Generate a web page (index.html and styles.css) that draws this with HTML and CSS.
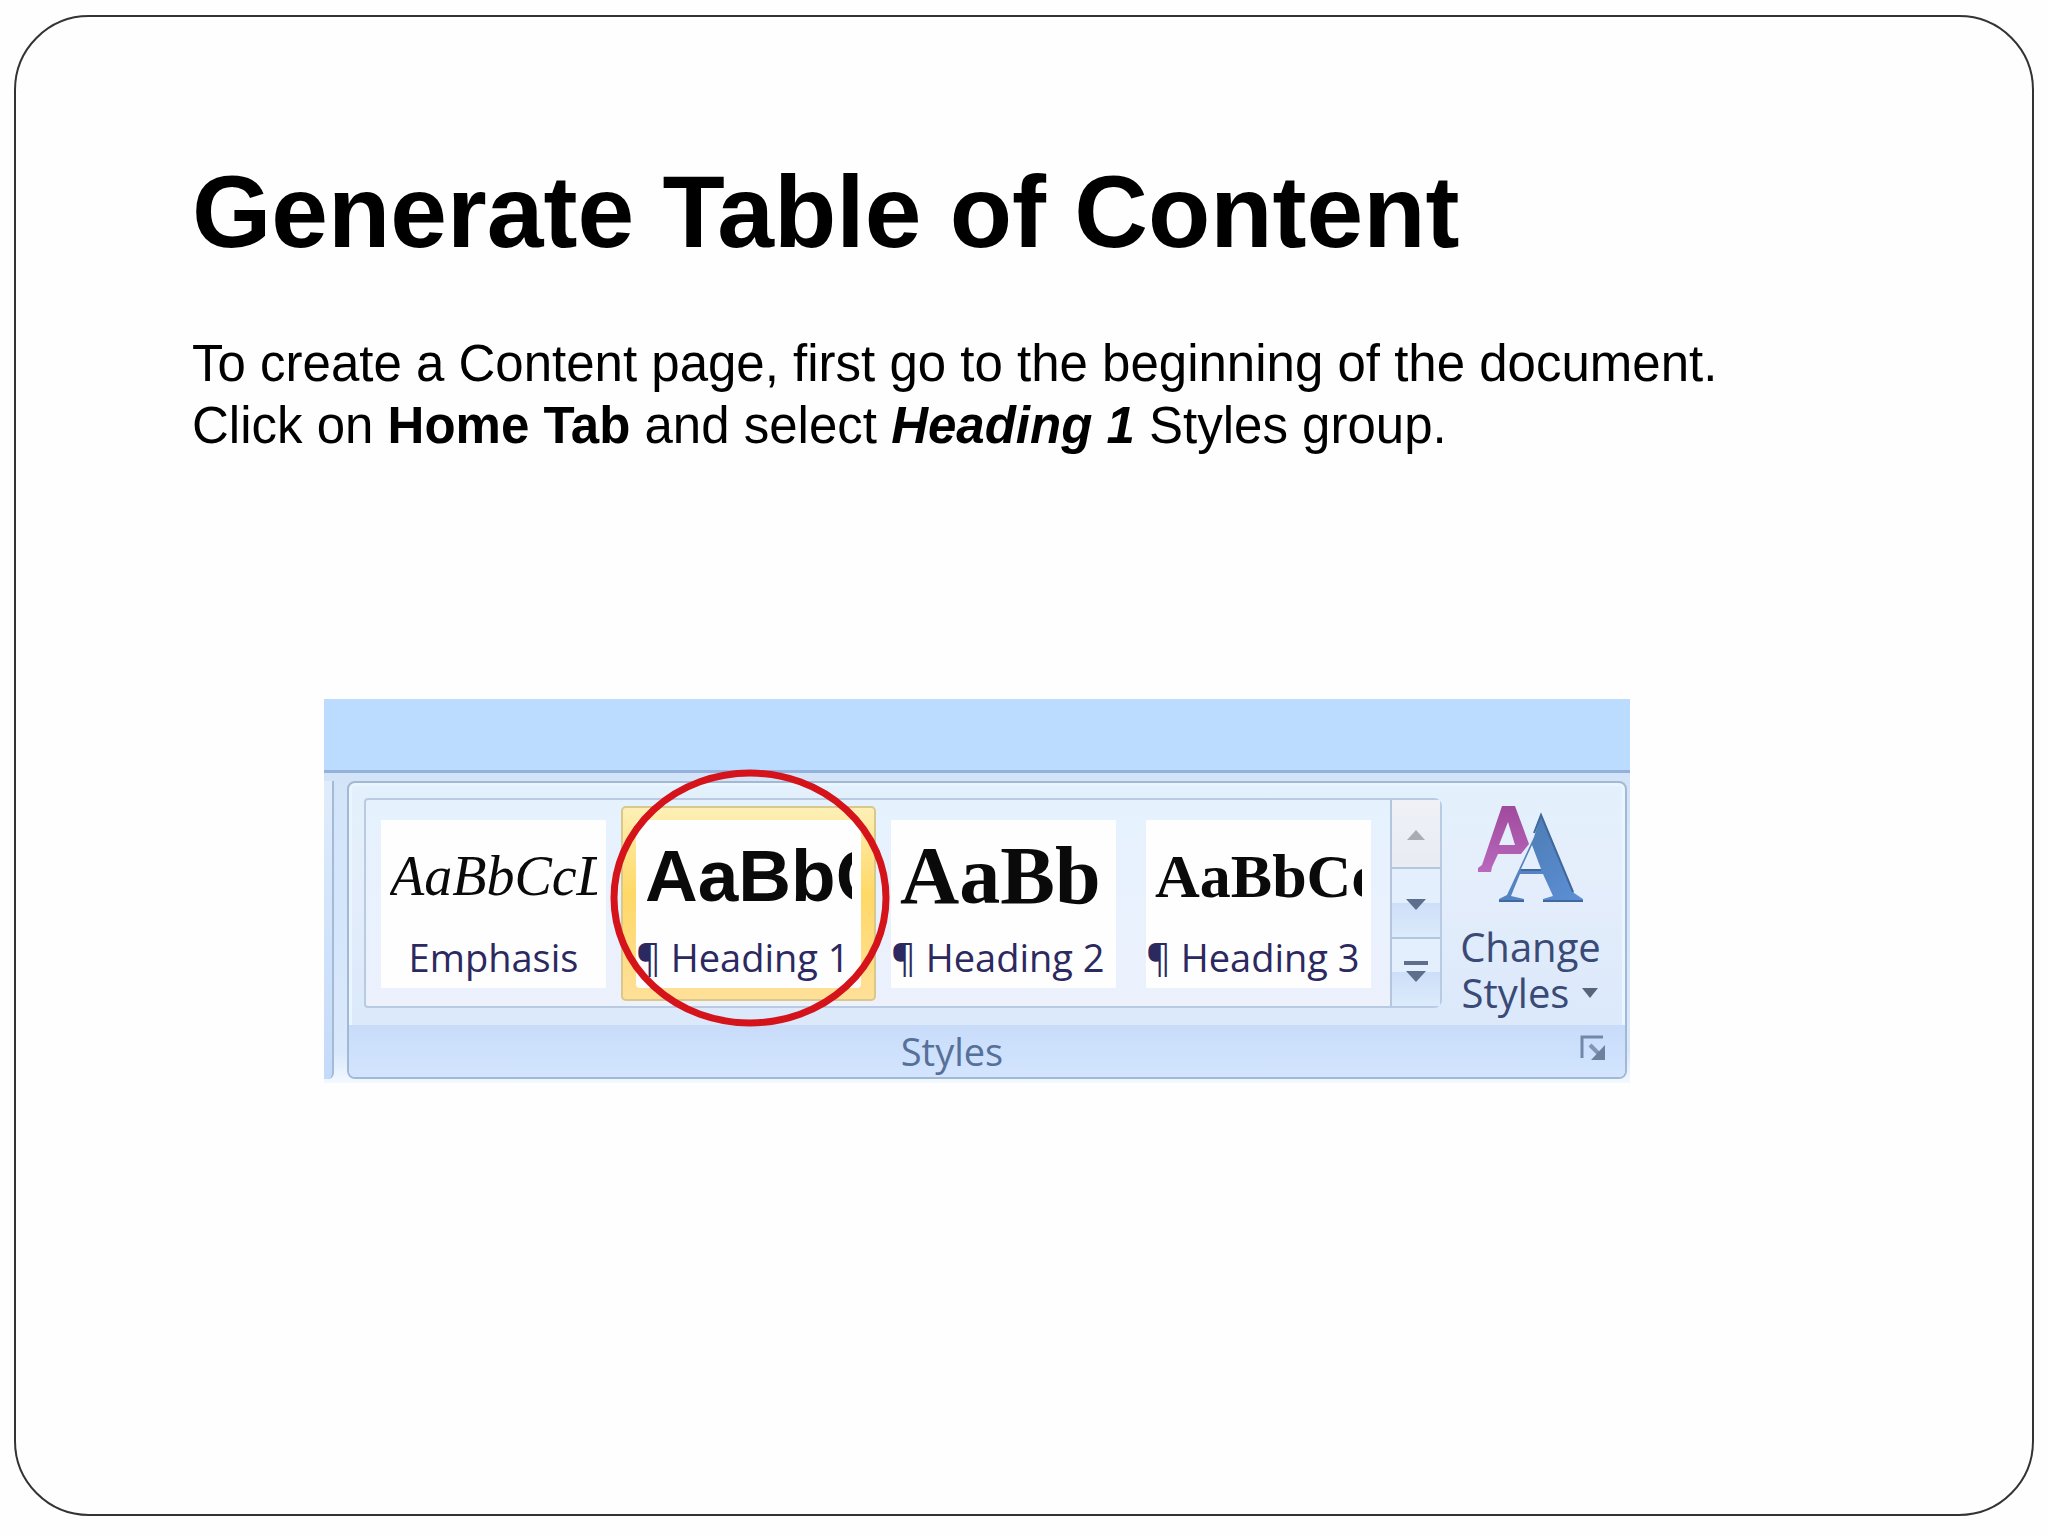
FILE: index.html
```html
<!DOCTYPE html>
<html lang="en">
<head>
    <meta charset="UTF-8">
    <meta name="viewport" content="width=device-width, initial-scale=1.0">
    <title>Generate Table of Content</title>
    <link rel="stylesheet" href="styles.css">
</head>
<body>
    <main class="slide">
        <h1>Generate Table of Content</h1>
        <p class="intro">To create a Content page, first go to the beginning of the document.<br>
            Click on <b>Home Tab</b> and select <b><i>Heading 1</i></b> Styles group.</p>

        <div class="ribbon">
            <div class="ribbon-top"></div>
            <div class="ribbon-body">
                <div class="prev-group"></div>
                <section class="group">
                    <div class="group-tools">
                        <div class="gallery">
                            <button type="button" class="style-item">
                                <span class="preview">
                                    <span class="sample emphasis">AaBbCcD</span>
                                    <span class="name centered">Emphasis</span>
                                </span>
                            </button>
                            <button type="button" class="style-item selected">
                                <span class="preview">
                                    <span class="sample heading-1">AaBbC</span>
                                    <span class="name">¶ Heading 1</span>
                                </span>
                                <svg class="circle" viewBox="0 0 280 258">
                                    <ellipse cx="140" cy="129" rx="136" ry="125" fill="none" stroke="#d4141a" stroke-width="7"/>
                                </svg>
                            </button>
                            <button type="button" class="style-item">
                                <span class="preview">
                                    <span class="sample heading-2">AaBb</span>
                                    <span class="name">¶ Heading 2</span>
                                </span>
                            </button>
                            <button type="button" class="style-item">
                                <span class="preview">
                                    <span class="sample heading-3">AaBbCc</span>
                                    <span class="name">¶ Heading 3</span>
                                </span>
                            </button>
                            <div class="scroller">
                                <button type="button" class="scroll-button disabled" aria-label="Row up">
                                    <svg width="28" height="24" viewBox="0 0 28 24"><path d="M5 18 14 8l9 10z" fill="#a9adb3"/></svg>
                                </button>
                                <button type="button" class="scroll-button" aria-label="Row down">
                                    <svg width="28" height="24" viewBox="0 0 28 24"><path d="M4 8h20L14 19z" fill="#5d6f8c"/></svg>
                                </button>
                                <button type="button" class="scroll-button" aria-label="More">
                                    <svg width="28" height="24" viewBox="0 0 28 24"><path d="M2 1h24v4H2zM4 11h20L14 22z" fill="#5d6f8c"/></svg>
                                </button>
                            </div>
                        </div>
                        <button type="button" class="change-styles">
                            <svg width="110" height="100" viewBox="0 0 110 100">
                                <defs>
                                    <linearGradient id="pink" x1="0" y1="0" x2="0" y2="1">
                                        <stop offset="0" stop-color="#a04a9c"/>
                                        <stop offset="1" stop-color="#b868bd"/>
                                    </linearGradient>
                                    <linearGradient id="blue" x1="0" y1="0" x2="1" y2="1">
                                        <stop offset="0" stop-color="#4a78ac"/>
                                        <stop offset="1" stop-color="#5c8fd6"/>
                                    </linearGradient>
                                </defs>
                                <path fill="url(#pink)" fill-rule="evenodd" d="M26 3h13l14 38-8 10H22l-6 13-1 5H2v-4l4-3zM32 19l-9 23h16z"/>
                                <path fill="url(#blue)" fill-rule="evenodd" d="M65 11 98 90l9 6v3H67v-3l10-3-10-22H44l-9 22 13 3v3H23v-3l8-4 27-58zM56 42 45 66h20z"/>
                                <path fill="none" stroke="#41689c" stroke-width="2" d="M58 30 65 12 97 89M45 67h20M23 98h25M67 98h40"/>
                            </svg>
                            <span>Change</span>
                            <span class="with-arrow">Styles
                                <svg width="18" height="12" viewBox="0 0 18 12"><path d="M1 1h16L9 11z" fill="#56647c"/></svg>
                            </span>
                        </button>
                    </div>
                    <footer class="group-footer">
                        <span>Styles</span>
                        <button type="button" class="launcher" aria-label="Styles window">
                            <svg width="28" height="28" viewBox="0 0 28 28">
                                <path d="M3 24V3h21" fill="none" stroke="#7288a8" stroke-width="3"/>
                                <path d="M11 11l9 9" fill="none" stroke="#8296b4" stroke-width="4"/>
                                <path d="M26 11v15H12z" fill="#6d819f"/>
                            </svg>
                        </button>
                    </footer>
                </section>
            </div>
        </div>
    </main>
</body>
</html>
```
FILE: styles.css
```css
* {
    box-sizing: border-box;
}
body {
    margin: 0;
    padding: 15px 14px 20px;
    min-height: 100vh;
    display: flex;
    background: #fefefe;
    color: #000;
    font-family: "Liberation Sans", Arial, sans-serif;
}
.slide {
    flex: 1;
    padding: 135px 176px;
    border: 2px solid #333;
    border-radius: 75px;
}
h1 {
    margin: 0;
    font-size: 102px;
    line-height: 120px;
}
.intro {
    margin: 61px 0 0;
    font-size: 51px;
    line-height: 62px;
}
button {
    margin: 0;
    padding: 0;
    border: none;
    background: none;
    font-family: "Open Sans", "Noto Sans", sans-serif;
    font-size: 38px;
    color: #2c2960;
    cursor: pointer;
}

/* ribbon */
.ribbon {
    width: fit-content;
    margin: 242px 0 0 132px;
    background: #d9e8fb;
}
.ribbon-top {
    height: 74px;
    background: #bbdbff;
    border-bottom: 3px solid #93b1dc;
}
.ribbon-body {
    display: flex;
    gap: 13px;
    padding: 8px 3px 4px 0;
    background: linear-gradient(#d3e4f9, #d9e8fb 90%, #f2f9ff);
}
.prev-group {
    width: 10px;
    border-right: 2px solid #a3bcd6;
    border-radius: 0 0 6px 0;
    background: linear-gradient(#dfecfb, #c4dafa);
}
.group {
    border: 2px solid #a3b9d3;
    border-radius: 8px;
    background: linear-gradient(#e3f1fd, #e5eefb 30%, #d8e7fb);
    box-shadow: inset 0 0 0 3px #eaf6ff;
}
.group-tools {
    display: flex;
    align-items: flex-start;
    padding: 15px 0 9px 15px;
}
.gallery {
    display: flex;
    border: 2px solid #b9cbe2;
    border-radius: 4px 8px 8px 4px;
    background: linear-gradient(#e5f2fe, #ecf1fc);
}
.style-item {
    position: relative;
    width: 255px;
    margin: 6px 0 5px;
    padding: 14px 15px 13px;
    border-radius: 5px;
}
.style-item.selected {
    z-index: 1;
    background: linear-gradient(#fdf0b8, #ffd866 45%, #ffe09a);
    box-shadow: inset 0 0 0 2px #d8c88c;
}
.preview {
    display: block;
    height: 168px;
    background: #fefefe;
}
.selected .preview {
    border-radius: 4px;
}
.sample {
    display: block;
    margin: 0 9px;
    overflow: hidden;
    line-height: 112px;
    text-align: left;
    white-space: nowrap;
    color: #0a0a0a;
}
.emphasis {
    font-family: "Liberation Serif", "Times New Roman", serif;
    font-size: 56px;
    font-style: italic;
}
.heading-1 {
    font-family: "Liberation Sans", Arial, sans-serif;
    font-size: 73px;
    font-weight: bold;
}
.heading-2 {
    font-family: "Liberation Serif", "Times New Roman", serif;
    font-size: 82px;
    font-weight: bold;
}
.heading-3 {
    font-family: "Liberation Serif", "Times New Roman", serif;
    font-size: 62px;
    font-weight: bold;
}
.name {
    display: block;
    line-height: 50px;
    text-align: left;
    white-space: nowrap;
}
.name.centered {
    text-align: center;
}
/* red ring drawn over the selected style */
.circle {
    position: absolute;
    left: -11px;
    top: -37px;
    width: 280px;
    height: 258px;
    pointer-events: none;
}
.scroller {
    display: flex;
    flex-direction: column;
    width: 50px;
    margin-left: 4px;
    border-left: 2px solid #b4c5dd;
}
.scroll-button {
    display: flex;
    flex: 1;
    align-items: center;
    justify-content: center;
    background: linear-gradient(#e3effd 50%, #cddff8 50%, #dcebfc);
}
.scroll-button + .scroll-button {
    border-top: 2px solid #b4c5dd;
}
.scroll-button.disabled {
    background: linear-gradient(#eff1f7, #e8ecf2);
}
.change-styles {
    display: flex;
    flex-direction: column;
    align-items: center;
    width: 183px;
    padding: 5px 6px 0 0;
    font-size: 40px;
    line-height: 46px;
    color: #3a4a76;
}
.change-styles > svg {
    margin-bottom: 21px;
}
.with-arrow {
    display: flex;
    align-items: center;
    gap: 12px;
}
.group-footer {
    display: grid;
    grid-template-columns: 1fr auto 1fr 52px;
    height: 52px;
    padding-right: 18px;
    border-radius: 0 0 6px 6px;
    background: linear-gradient(#c8dcfa, #d3e5fe);
    font-family: "Open Sans", "Noto Sans", sans-serif;
    font-size: 38px;
    line-height: 52px;
    color: #577099;
}
.group-footer span {
    grid-column: 2;
}
.launcher {
    grid-column: 4;
    justify-self: end;
    align-self: start;
    display: flex;
    padding-top: 9px;
}
```
